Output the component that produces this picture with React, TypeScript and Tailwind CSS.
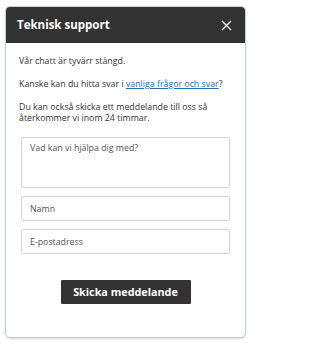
import React from "react";

const font = { fontFamily: '"Open Sans", "Liberation Sans", sans-serif' };

const SupportWidget = () => {
  return (
    <div className="w-[251px] h-[346px] bg-white pt-[6px] pl-[5px]" style={font}>
      <div className="w-[241px] h-[332px] rounded-[5px] border border-[#c3d3d8] shadow-[0_1px_2px_rgba(0,0,0,0.15)] overflow-hidden flex flex-col bg-white">
        <div className="h-[36px] bg-[#333333] flex items-center justify-between pl-[11px] pr-[13px] shrink-0">
          <p className="text-white text-[11.5px] font-bold">Teknisk support</p>
          <svg width="11" height="11" viewBox="0 0 11 11" className="cursor-pointer">
            <path d="M1 1L10 10M10 1L1 10" stroke="white" strokeWidth="1.3" />
          </svg>
        </div>

        <div className="flex flex-col px-[13px] pt-[13px] text-[8.8px] text-[#333333] leading-[11px]">
          <p>Vår chatt är tyvärr stängd.</p>
          <p className="mt-[12px]">
            Kanske kan du hitta svar i{" "}
            <a href="#" className="text-[#2a6db5] underline">
              vanliga frågor och svar
            </a>
            ?
          </p>
          <p className="mt-[12px]">
            Du kan också skicka ett meddelande till oss så återkommer vi inom 24 timmar.
          </p>
        </div>

        <div className="flex flex-col gap-[8px] pl-[15px] pr-[15px] mt-[13px]">
          <textarea
            placeholder="Vad kan vi hjälpa dig med?"
            className="h-[51px] w-full resize-none border border-[#d6d6d6] rounded-[2px] px-[8px] py-[5px] text-[8.8px] leading-[11px] placeholder:text-[#555555] outline-none"
          />
          <input
            placeholder="Namn"
            className="h-[25px] w-full border border-[#d6d6d6] rounded-[2px] px-[8px] text-[8.8px] placeholder:text-[#555555] outline-none"
          />
          <input
            placeholder="E-postadress"
            className="h-[25px] w-full border border-[#d6d6d6] rounded-[2px] px-[8px] text-[8.8px] placeholder:text-[#555555] outline-none"
          />
        </div>

        <div className="flex justify-center mt-[26px]">
          <button className="w-[130px] h-[24px] bg-[#333333] text-white text-[10.8px] font-bold rounded-[1px]">
            Skicka meddelande
          </button>
        </div>
      </div>
    </div>
  );
};

export default function App() {
  return <SupportWidget />;
}
